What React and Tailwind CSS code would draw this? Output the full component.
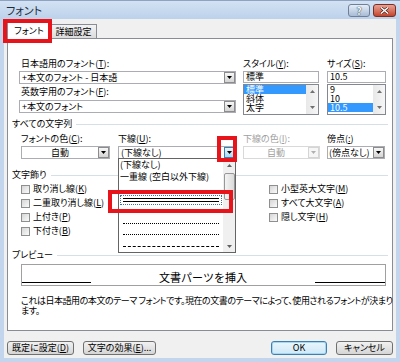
import React from "react";

const FONT = "font-['Noto_Sans_CJK_JP',sans-serif] [font-feature-settings:'palt']";

function M({ c }) {
  return <span className="underline underline-offset-[1px]">{c}</span>;
}

function Tri({ color = "#000" }) {
  return (
    <svg width="5" height="3" viewBox="0 0 5 3" className="block">
      <path d="M0 0H5L2.5 3Z" fill={color} />
    </svg>
  );
}

function UpTri({ color = "#505050" }) {
  return (
    <svg width="5" height="3" viewBox="0 0 5 3" className="block">
      <path d="M0 3H5L2.5 0Z" fill={color} />
    </svg>
  );
}

function ArrowBtn({ variant = "normal" }) {
  if (variant === "pressed")
    return (
      <div className="w-[11px] h-[11px] shrink-0 flex items-center justify-center border border-[#3c7fb1] bg-gradient-to-b from-[#eaf6fd] to-[#a7d9f5]">
        <Tri />
      </div>
    );
  if (variant === "disabled")
    return (
      <div className="w-[11px] h-[11px] shrink-0 flex items-center justify-center border border-[#d5d5d5] bg-[#f6f6f6]">
        <Tri color="#b0b0b0" />
      </div>
    );
  return (
    <div className="w-[11px] h-[11px] shrink-0 flex items-center justify-center border border-[#8c8c8c] bg-gradient-to-b from-[#f7f7f7] to-[#d4d4d4]">
      <Tri />
    </div>
  );
}

function Check({ children }) {
  return (
    <div className="h-[14px] flex items-center">
      <div className="w-[9px] h-[9px] shrink-0 border border-[#8e8f8f] bg-gradient-to-br from-[#d6d6d6] to-[#fafafa]" />
      <span className="ml-[3px] leading-[12px] whitespace-nowrap">{children}</span>
    </div>
  );
}

function Group({ children, className }) {
  return (
    <div className={`flex items-center h-[12px] ml-[4px] mr-[4px] ${className}`}>
      <span className="leading-[12px] whitespace-nowrap">{children}</span>
      <div className="flex-1 h-px bg-[#d5dfe5] ml-[4px]" />
    </div>
  );
}

function ListScroll() {
  return (
    <div className="w-[12px] shrink-0 bg-gradient-to-r from-[#e8e8e8] to-[#f6f6f6] flex flex-col items-center justify-between py-[5px]">
      <UpTri color="#707070" />
      <Tri color="#707070" />
    </div>
  );
}

export default function App() {
  return (
    <div className={`w-[400px] h-[362px] overflow-hidden bg-[#c2d5ec] flex flex-col ${FONT} text-[9px] text-black`}>
      {/* Title bar */}
      <div className="h-[19px] shrink-0 flex items-start justify-between bg-gradient-to-b from-[#d3e2f3] to-[#bcd1ea] border-t border-[#8ea3bf]">
        <div className="ml-[6px] mt-[2px] text-[11px] leading-[14px] text-[#1e2b3c]">フォント</div>
        <div className="flex mt-[3px] mr-[4px] gap-[3px]">
          <div className="w-[22px] h-[13px] rounded-[3px] border border-[#6f7f97] bg-gradient-to-b from-[#e4edf7] to-[#a9bcd5] flex items-center justify-center text-[10px] leading-[10px] font-bold text-[#f4f7fb] [text-shadow:0_0_1px_#2d3d55,0_0_1px_#2d3d55]">
            ?
          </div>
          <div className="w-[23px] h-[13px] rounded-[3px] border border-[#7a2f25] bg-gradient-to-b from-[#e8a194] to-[#c3432d] flex items-center justify-center">
            <svg width="9" height="7" viewBox="0 0 9 7">
              <path d="M1 0.5L8 6.5M8 0.5L1 6.5" stroke="#3a1510" strokeWidth="2.6" />
              <path d="M1 0.5L8 6.5M8 0.5L1 6.5" stroke="#ffffff" strokeWidth="1.5" />
            </svg>
          </div>
        </div>
      </div>

      {/* Body */}
      <div className="mx-[4px] h-[339px] shrink-0 bg-[#f0f0f0] flex flex-col">
        {/* Tabs */}
        <div className="flex items-end ml-[3px] mt-[2px] h-[17px] relative z-10">
          <div className="relative w-[44px] h-[18px] mb-[-1px] border border-b-0 border-[#898c95] bg-white flex items-center justify-center">
            <span className="leading-[12px]">フォント</span>
            <div className="absolute left-[-5px] top-[-3px] w-[49px] h-[24px] border-[4px] border-[#e8141c]" />
          </div>
          <div className="w-[46px] h-[14px] border border-l-0 border-b-0 border-[#898c95] bg-gradient-to-b from-[#f3f3f3] to-[#dcdcdc] flex items-center justify-center">
            <span className="leading-[12px]">詳細設定</span>
          </div>
        </div>

        {/* Panel */}
        <div className="relative ml-[3px] w-[386px] h-[293px] shrink-0 border border-[#898c95] bg-white flex flex-col">
          {/* Section 1 */}
          <div className="flex mt-[19px] ml-[11px]">
            <div className="w-[217px] flex flex-col">
              <div className="h-[12px] leading-[12px] pl-[2px] whitespace-nowrap">
                日本語用のフォント(<M c="T" />):
              </div>
              <div className="mt-[1px] h-[13px] border border-[#abadb3] flex items-center justify-between pl-[2px]">
                <span className="leading-[11px] whitespace-nowrap">+本文のフォント - 日本語</span>
                <ArrowBtn />
              </div>
              <div className="mt-[2px] h-[12px] leading-[12px] pl-[2px] whitespace-nowrap">
                英数字用のフォント(<M c="F" />):
              </div>
              <div className="mt-[2px] h-[13px] border border-[#abadb3] flex items-center justify-between pl-[2px]">
                <span className="leading-[11px] whitespace-nowrap">+本文のフォント</span>
                <ArrowBtn />
              </div>
            </div>

            <div className="w-[76px] ml-[7px] flex flex-col">
              <div className="h-[12px] leading-[12px] whitespace-nowrap">
                スタイル(<M c="Y" />):
              </div>
              <div className="mt-[1px] h-[12px] border border-[#abadb3] flex items-center pl-[2px]">
                <span className="leading-[10px]">標準</span>
              </div>
              <div className="mt-[1px] h-[31px] border border-[#828790] flex">
                <div className="flex-1 flex flex-col">
                  <div className="h-[9px] leading-[9px] pl-[2px] bg-[#3399ff] text-white">標準</div>
                  <div className="h-[9px] leading-[9px] pl-[2px]">斜体</div>
                  <div className="h-[9px] leading-[9px] pl-[2px]">太字</div>
                </div>
                <ListScroll />
              </div>
            </div>

            <div className="w-[59px] ml-[8px] flex flex-col">
              <div className="h-[12px] leading-[12px] whitespace-nowrap">
                サイズ(<M c="S" />):
              </div>
              <div className="mt-[1px] h-[12px] border border-[#abadb3] flex items-center pl-[2px]">
                <span className="leading-[10px]">10.5</span>
              </div>
              <div className="mt-[1px] h-[31px] border border-[#828790] flex">
                <div className="flex-1 flex flex-col">
                  <div className="h-[9px] leading-[9px] pl-[2px]">9</div>
                  <div className="h-[9px] leading-[9px] pl-[2px]">10</div>
                  <div className="h-[9px] leading-[9px] pl-[2px] bg-[#3399ff] text-white">10.5</div>
                </div>
                <ListScroll />
              </div>
            </div>
          </div>

          {/* すべての文字列 */}
          <Group className="mt-[3px]">すべての文字列</Group>

          <div className="flex mt-[3px] ml-[13px]">
            <div className="w-[89px] flex flex-col">
              <div className="h-[12px] leading-[12px] whitespace-nowrap">
                フォントの色(<M c="C" />):
              </div>
              <div className="mt-[1px] h-[13px] border border-[#abadb3] flex items-center">
                <span className="flex-1 text-center leading-[11px]">自動</span>
                <ArrowBtn />
              </div>
            </div>

            <div className="w-[118px] ml-[8px] flex flex-col">
              <div className="h-[12px] leading-[12px] whitespace-nowrap">
                下線(<M c="U" />):
              </div>
              <div className="relative mt-[1px] h-[13px] border border-[#abadb3] flex items-center justify-between pl-[2px]">
                <span className="leading-[11px] whitespace-nowrap">(下線なし)</span>
                <ArrowBtn variant="pressed" />
                <div className="absolute left-[98px] top-[-11px] w-[20px] h-[26px] border-[4px] border-[#e8141c] z-30" />

                {/* Dropdown list */}
                <div className="absolute left-[-1px] top-[11px] w-[118px] h-[95px] border border-[#646464] bg-white z-20 flex">
                  <div className="flex-1 flex flex-col overflow-hidden">
                    <div className="h-[12px] leading-[12px] pl-[1px] whitespace-nowrap">(下線なし)</div>
                    <div className="h-[12px] leading-[12px] pl-[1px] whitespace-nowrap">一重線 (空白以外下線)</div>
                    <div className="h-[12px] flex items-end pb-[3px] px-[4px]">
                      <div className="w-full h-px bg-black" />
                    </div>
                    <div className="h-[12px] flex items-center px-[1px]">
                      <div className="w-full h-[10px] border border-dotted border-[#3a6ea5] flex flex-col justify-center gap-[2px] px-[2px]">
                        <div className="h-px bg-black" />
                        <div className="h-px bg-black" />
                      </div>
                    </div>
                    <div className="h-[12px] flex items-start pt-[3px] px-[4px]">
                      <div className="w-full h-[2px] bg-black" />
                    </div>
                    <div className="h-[12px] flex items-center px-[4px]">
                      <div className="w-full border-t border-dotted border-black" />
                    </div>
                    <div className="h-[12px] flex items-center px-[4px]">
                      <div className="w-full border-t border-dotted border-black" />
                    </div>
                    <div className="h-[12px] flex items-center px-[4px]">
                      <div className="w-full border-t border-dashed border-black" />
                    </div>
                  </div>
                  <div className="w-[12px] shrink-0 bg-[#f0f0f0] flex flex-col items-center">
                    <div className="h-[12px] flex items-center">
                      <UpTri color="#606060" />
                    </div>
                    <div className="mt-[2px] w-[11px] h-[27px] rounded-[2px] border border-[#979797] bg-gradient-to-r from-[#f4f4f4] to-[#dadada]" />
                    <div className="flex-1" />
                    <div className="h-[12px] flex items-center">
                      <Tri color="#606060" />
                    </div>
                  </div>
                  <div className="absolute left-[-11px] top-[31px] w-[125px] h-[23px] border-[4px] border-[#e8141c] z-30" />
                </div>
              </div>
            </div>

            <div className="w-[77px] ml-[7px] flex flex-col">
              <div className="h-[12px] leading-[12px] whitespace-nowrap text-[#a0a0a0]">
                下線の色(<M c="I" />):
              </div>
              <div className="mt-[1px] h-[13px] border border-[#d9d9d9] flex items-center">
                <span className="flex-1 text-center leading-[11px] text-[#a0a0a0]">自動</span>
                <ArrowBtn variant="disabled" />
              </div>
            </div>

            <div className="w-[58px] ml-[7px] flex flex-col">
              <div className="h-[12px] leading-[12px] whitespace-nowrap">
                傍点(<M c=":" />)
              </div>
              <div className="mt-[1px] h-[13px] border border-[#abadb3] flex items-center justify-between pl-[1px]">
                <span className="leading-[11px] whitespace-nowrap">(傍点なし)</span>
                <ArrowBtn />
              </div>
            </div>
          </div>

          {/* 文字飾り */}
          <Group className="mt-[10px]">文字飾り</Group>

          <div className="flex mt-[1px] ml-[13px]">
            <div className="w-[248px] flex flex-col">
              <Check>取り消し線(<M c="K" />)</Check>
              <Check>二重取り消し線(<M c="L" />)</Check>
              <Check>上付き(<M c="P" />)</Check>
              <Check>下付き(<M c="B" />)</Check>
            </div>
            <div className="flex flex-col">
              <Check>小型英大文字(<M c="M" />)</Check>
              <Check>すべて大文字(<M c="A" />)</Check>
              <Check>隠し文字(<M c="H" />)</Check>
            </div>
          </div>

          {/* プレビュー */}
          <Group className="mt-[11px]">プレビュー</Group>

          <div className="mt-[3px] ml-[13px] w-[365px] h-[22px] border border-[#a0a0a0] flex items-end pb-[2px]">
            <div className="w-[69px] h-px bg-black" />
            <div className="flex-1 text-center text-[11px] leading-[12px] [font-feature-settings:normal]">文書パーツを挿入</div>
            <div className="w-[70px] h-px bg-black" />
          </div>

          <div className="mt-[10px] ml-[13px] leading-[10px] whitespace-nowrap tracking-[-0.45px]">
            <div>これは日本語用の本文のテーマ&nbsp;フォントです。現在の文書のテーマによって、使用されるフォントが決まり</div>
            <div>ます。</div>
          </div>
        </div>

        {/* Buttons */}
        <div className="flex mt-[10px] ml-[3px] mr-[3px] h-[14px]">
          <div className="w-[67px] h-[14px] rounded-[3px] border border-[#707070] bg-gradient-to-b from-[#f2f2f2] to-[#d5d5d5] flex items-center justify-center">
            <span className="leading-[12px]">既定に設定(<M c="D" />)</span>
          </div>
          <div className="ml-[9px] w-[73px] h-[14px] rounded-[3px] border border-[#707070] bg-gradient-to-b from-[#f2f2f2] to-[#d5d5d5] flex items-center justify-center">
            <span className="leading-[12px]">文字の効果(<M c="E" />)...</span>
          </div>
          <div className="flex-1" />
          <div className="w-[56px] h-[14px] rounded-[3px] border border-[#3c7fb1] bg-gradient-to-b from-[#eaf6fd] to-[#cfe8f7] shadow-[inset_0_0_0_1px_#a6d7f2] flex items-center justify-center">
            <span className="leading-[12px]">OK</span>
          </div>
          <div className="ml-[9px] w-[57px] h-[14px] rounded-[3px] border border-[#707070] bg-gradient-to-b from-[#f2f2f2] to-[#d5d5d5] flex items-center justify-center">
            <span className="leading-[12px]">キャンセル</span>
          </div>
        </div>
      </div>
    </div>
  );
}
